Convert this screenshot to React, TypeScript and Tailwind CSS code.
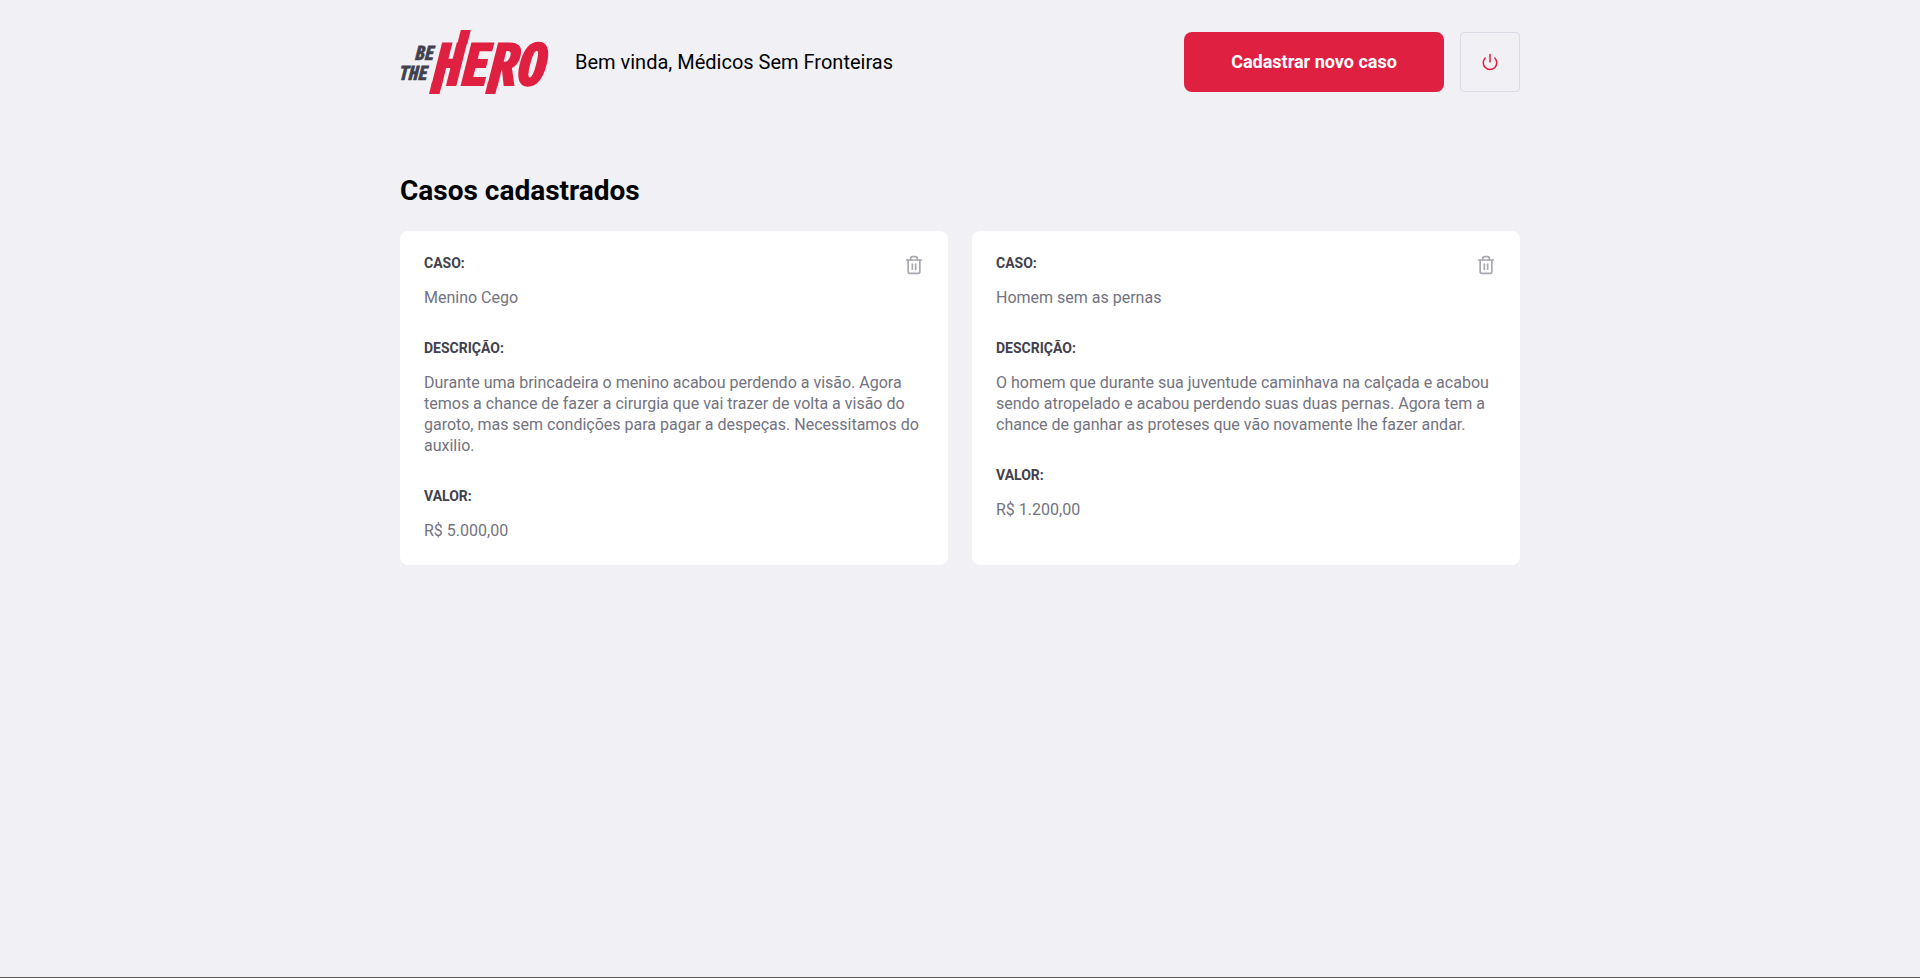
import { FiPower, FiTrash2 } from "react-icons/fi";

type Incident = {
  id: number;
  title: string;
  description: string;
  value: string;
};

const incidents: Incident[] = [
  {
    id: 1,
    title: "Menino Cego",
    description:
      "Durante uma brincadeira o menino acabou perdendo a visão. Agora temos a chance de fazer a cirurgia que vai trazer de volta a visão do garoto, mas sem condições para pagar a despeças. Necessitamos do auxilio.",
    value: "R$ 5.000,00",
  },
  {
    id: 2,
    title: "Homem sem as pernas",
    description:
      "O homem que durante sua juventude caminhava na calçada e acabou sendo atropelado e acabou perdendo suas duas pernas. Agora tem a chance de ganhar as proteses que vão novamente lhe fazer andar.",
    value: "R$ 1.200,00",
  },
];

function Logo() {
  return (
    <svg
      viewBox="0 0 151 64"
      className="h-16 w-auto shrink-0 overflow-visible font-['Noto_Sans_Mono_CJK_SC','Roboto_Condensed',sans-serif] font-black italic"
      role="img"
      aria-label="Be The Hero"
    >
      <g fill="#41414d" stroke="#41414d" strokeWidth="0.6" fontSize="19">
        <text x="14" y="30">BE</text>
        <text x="-2" y="50">THE</text>
      </g>
      <g fill="#e02041" stroke="#e02041" strokeWidth="2" fontSize="56">
        <text x="30" y="55">HERO</text>
      </g>
      {/* accents that lengthen the stems above and below the wordmark */}
      <path d="M57.3 14L60.8 0H70.8L67.3 14ZM32 52H42.5L39.5 64H29ZM88 52H98.3L95.3 64H85Z" fill="#e02041" />
    </svg>
  );
}

function Field({ label, children }: { label: string; children: string }) {
  return (
    <div>
      <dt className="text-sm leading-4 font-bold text-[#41414d]">{label}</dt>
      <dd className="mt-4 text-base leading-[21px] text-[#737380]">{children}</dd>
    </div>
  );
}

function IncidentCard({ incident }: { incident: Incident }) {
  return (
    <li className="relative rounded-lg bg-white p-6">
      <dl className="flex flex-col gap-8">
        <Field label="CASO:">{incident.title}</Field>
        <Field label="DESCRIÇÃO:">{incident.description}</Field>
        <Field label="VALOR:">{incident.value}</Field>
      </dl>
      <button
        type="button"
        aria-label={`Excluir ${incident.title}`}
        className="absolute top-6 right-6 cursor-pointer text-[#a8a8b3] hover:opacity-80"
      >
        <FiTrash2 size={20} />
      </button>
    </li>
  );
}

export default function App() {
  return (
    <div className="flex min-h-screen flex-col bg-[#f0f0f5] font-[Roboto,sans-serif] text-black">
      <div className="mx-auto w-full max-w-[1180px] flex-1 px-[30px] py-[30px]">
        <header className="flex items-center">
          <Logo />
          <span className="ml-6 text-xl">Bem vinda, Médicos Sem Fronteiras</span>
          <a
            href="#novo"
            className="ml-auto flex h-[60px] w-[260px] items-center justify-center rounded-lg bg-[#e02041] text-lg font-bold text-white"
          >
            Cadastrar novo caso
          </a>
          <button
            type="button"
            aria-label="Sair"
            className="ml-4 flex size-[60px] cursor-pointer items-center justify-center rounded border border-[#dcdce6] text-[#e02041]"
          >
            <FiPower size={18} />
          </button>
        </header>

        <main>
          <h1 className="mt-20 mb-6 text-[28px] leading-[33px] font-bold">Casos cadastrados</h1>
          <ul className="grid grid-cols-2 gap-6">
            {incidents.map((incident) => (
              <IncidentCard key={incident.id} incident={incident} />
            ))}
          </ul>
        </main>
      </div>
      <div className="h-px bg-[#595656]" />
    </div>
  );
}
